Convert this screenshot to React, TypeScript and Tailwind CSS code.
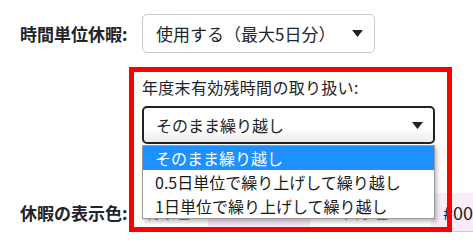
import React from 'react'

function Caret() {
  return (
    <svg width="11" height="7" viewBox="0 0 11 7" className="shrink-0">
      <path d="M0 0 H11 L5.5 7 Z" fill="#1f2328" />
    </svg>
  )
}

const options = ['そのまま繰り越し', '0.5日単位で繰り上げして繰り越し', '1日単位で繰り上げして繰り越し']

export default function App() {
  return (
    <div
      className="relative w-[473px] h-[239px] overflow-hidden bg-white pl-[20px] pt-[14px] text-[#212529] whitespace-nowrap"
      style={{ fontFamily: '"Noto Sans CJK JP", "Noto Sans", sans-serif' }}
    >
      {/* 時間単位休暇 */}
      <div className="flex items-center">
        <div className="w-[122px] shrink-0 text-[17px] font-bold">時間単位休暇:</div>
        <div className="flex h-[39px] w-[233px] shrink-0 items-center justify-between rounded-[5px] border border-[#c8c8c8] pl-[13px] pr-[11px] text-[17px]">
          <span>使用する（最大5日分）</span>
          <Caret />
        </div>
      </div>

      {/* 年度末有効残時間 */}
      <div className="ml-[122px] mt-[22px] w-[293px]">
        <div className="h-[24px] text-[16px] leading-[24px] tracking-[0.3px]">年度末有効残時間の取り扱い:</div>
        <div className="relative mt-[7px]">
          <div className="flex h-[38px] items-center justify-between rounded-[5px] border-2 border-[#1f2328] bg-gradient-to-b from-white from-60% to-[#ececec] pl-[12px] pr-[10px] text-[16px]">
            <span>そのまま繰り越し</span>
            <Caret />
          </div>
          <div className="absolute left-0 top-[39px] z-10 w-full border border-[#9a9a9a] bg-white shadow-[2px_3px_4px_rgba(0,0,0,0.25)]">
            {options.map((o, i) => (
              <div
                key={o}
                className={
                  i === 0
                    ? 'h-[24px] bg-[#1e90ff] pl-[12px] text-[16px] leading-[24px] text-white'
                    : 'h-[24px] pl-[12px] text-[16px] leading-[24px] text-[#1a1a1a]'
                }
              >
                {o}
              </div>
            ))}
          </div>
        </div>
      </div>

      {/* 休暇の表示色 */}
      <div className="mt-[49px] flex items-center">
        <div className="w-[122px] shrink-0 text-[17px] font-bold">休暇の表示色:</div>
        <div className="flex h-[39px] shrink-0 border-b border-[#d0d0d0] text-[15px] text-[#888]">
          <div className="flex w-[66px] shrink-0 items-center pl-[4px]">背景色:</div>
          <div className="flex w-[102px] shrink-0 items-center bg-[#f6e6f6] pl-[10px]">#FCE4FF</div>
          <div className="flex w-[121px] shrink-0 items-center gap-[10px] pl-[6px]">
            <span className="h-[4px] w-[18px] bg-[#777]" />
            <span>文字色:</span>
          </div>
          <div className="flex w-[80px] shrink-0 items-center bg-[#f9ecf9] pl-[12px] text-[18px] text-[#222]">#000000</div>
        </div>
      </div>

      {/* annotation frame */}
      <div className="pointer-events-none absolute left-[129px] top-[67px] z-20 h-[165px] w-[323px] border-[5px] border-[#ff0000]" />
    </div>
  )
}
